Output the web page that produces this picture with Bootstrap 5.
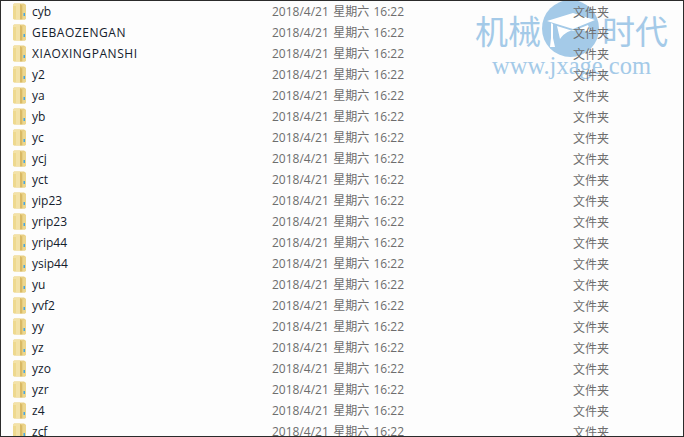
<!DOCTYPE html>
<html lang="en">

<head>
    <meta charset="UTF-8">
    <title>文件夹</title>
    <link href="https://cdn.jsdelivr.net/npm/bootstrap@5.3.0/dist/css/bootstrap.min.css" rel="stylesheet">
    <style>
        html, body {
            height: 100%;
            overflow: hidden;
            background: #fff;
        }

        .explorer {
            position: relative;
            width: 684px;
            height: 437px;
            overflow: hidden;
            border: 1px solid #2b2b2b;
            background: #fdfdfd;
            font-family: "Open Sans", "Noto Sans CJK SC", sans-serif;
            font-size: 12px;
        }

        .file-row {
            height: 21px;
            line-height: 21px;
            white-space: nowrap;
        }

        .file-icon {
            width: 14px;
            height: 17px;
            margin-left: 12px;
            margin-right: 5px;
            flex: none;
        }

        .file-name {
            width: 240px;
            color: #14202c;
            flex: none;
        }

        .name-caps {
            letter-spacing: .55px;
        }

        .file-date {
            width: 301px;
            color: #6d6d6d;
            word-spacing: 1.2px;
            flex: none;
        }

        .file-type {
            color: #6d6d6d;
            font-family: "Noto Sans CJK SC", sans-serif;
        }

        .watermark {
            position: absolute;
            left: 475px;
            top: 0;
            width: 200px;
            height: 80px;
            color: #a4cae8;
            z-index: 0;
        }

        .wm-title {
            position: absolute;
            top: 10px;
            left: -1px;
            font-family: "Noto Sans CJK SC", sans-serif;
            font-size: 33px;
            line-height: 38px;
            width: 193px;
            display: flex;
            justify-content: space-between;
        }

        .wm-url {
            position: absolute;
            top: 52px;
            left: 16px;
            font-family: "Liberation Serif", serif;
            font-size: 24.5px;
            line-height: 26px;
        }

        .wm-badge {
            position: absolute;
            left: 66px;
            top: -1px;
            width: 57px;
            height: 57px;
        }

        .file-list {
            position: relative;
            z-index: 1;
        }
    </style>
</head>

<body>
    <div class="explorer">
        <div class="watermark">
            <div class="wm-title"><span>机械</span><span>时代</span></div>
            <svg class="wm-badge" viewBox="0 0 57 57">
                <circle cx="28.5" cy="28.5" r="28.5" fill="#a4cae8"/>
                <path d="M5 21 31 13 53 20 31 29Z" fill="#fff"/>
                <path d="M15 26 31 31 46 25 49 33C38 27 24 29 18 39Z" fill="#fff"/>
                <path d="M9 23 11 24V38L13 47H8L9 38Z" fill="#fff"/>
            </svg>
            <div class="wm-url">www.jxage.com</div>
        </div>

        <div class="file-list" id="fileList"></div>
    </div>

    <script>
        // folder rows, all share the same date and type
        const names = ['cyb', 'GEBAOZENGAN', 'XIAOXINGPANSHI', 'y2', 'ya', 'yb', 'yc', 'ycj', 'yct', 'yip23', 'yrip23',
            'yrip44', 'ysip44', 'yu', 'yvf2', 'yy', 'yz', 'yzo', 'yzr', 'z4', 'zcf'];

        const icon = `<svg class="file-icon" viewBox="0 0 14 17">
            <path d="M0 2 1 .5H11L13 2V15.5L12 16.5H1L0 15.5Z" fill="#e9cf83"/>
            <path d="M0 2 1 .5H7V16.5H1L0 15.5Z" fill="#f3e2a8"/>
            <path d="M0 3H3V16H1L0 15.5Z" fill="#eed98f"/>
            <path d="M7 1 9.5 3V16.5H7Z" fill="#d9b964"/>
            <path d="M9.5 3 12 1.5 13 2.5V15.5L12 16.5H9.5Z" fill="#ecd68e"/>
            <rect x="10.5" y="10" width="1.5" height="3" fill="#45a5e0"/>
        </svg>`;

        document.getElementById('fileList').innerHTML = names.map(name => `
            <div class="file-row d-flex align-items-center">
                ${icon}
                <span class="file-name ${name === name.toUpperCase() ? 'name-caps' : ''}">${name}</span>
                <span class="file-date">2018/4/21 星期六 16:22</span>
                <span class="file-type">文件夹</span>
            </div>`).join('');
    </script>
    <script src="https://cdn.jsdelivr.net/npm/bootstrap@5.3.0/dist/js/bootstrap.bundle.min.js"></script>
</body>

</html>
